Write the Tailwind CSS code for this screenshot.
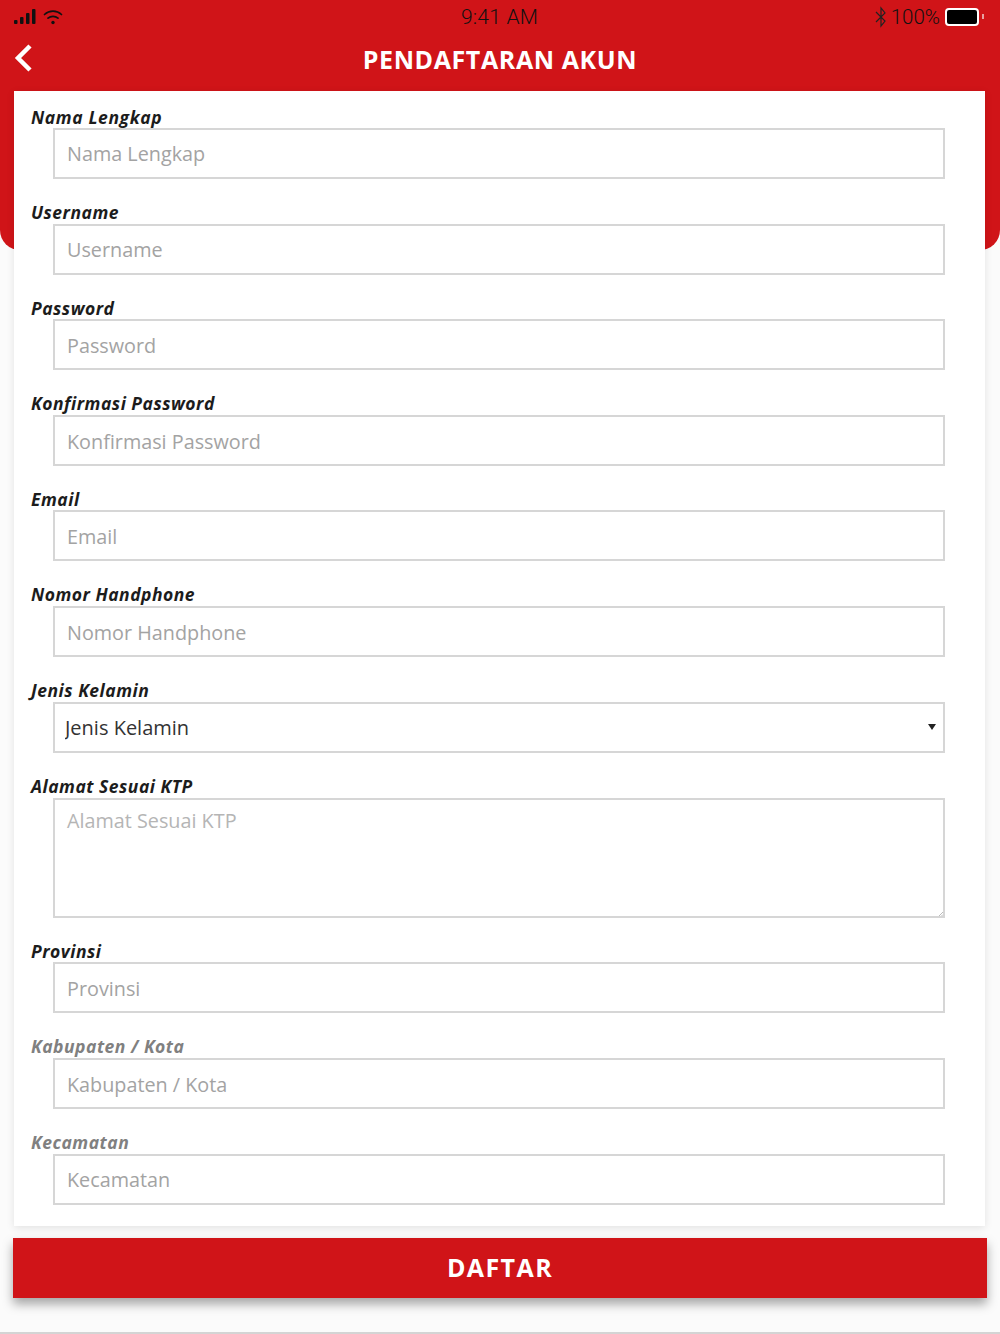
<!DOCTYPE html>
<html lang="en">
  <head>
    <script src="https://cdn.jsdelivr.net/npm/@tailwindcss/browser@4"></script>
    <meta charset="UTF-8" />
    <meta name="viewport" content="width=device-width, initial-scale=1.0" />
    <title>Pendaftaran Akun</title>
  </head>
  <body class="bg-[#fbfbfb] font-['Open_Sans',sans-serif]">
    <div class="relative h-[1334px] overflow-hidden border-b-2 border-[#d4d4d4]">
      <!-- Red backdrop behind the card -->
      <div class="absolute top-0 left-0 right-0 h-[250px] bg-[#d01418] rounded-b-[20px]"></div>

      <div class="relative">
        <!-- Status bar -->
        <div class="h-[33px] flex items-center justify-between pl-[14px] pr-[16px] text-[#111] font-['Roboto',sans-serif] font-light text-[21px]">
          <div class="w-[200px] flex items-center gap-[5px]">
            <svg width="24" height="16" viewBox="0 0 24 16" fill="#111">
              <rect x="0" y="11" width="3.5" height="4" rx="1" />
              <rect x="6" y="8" width="3.5" height="7" rx="1" />
              <rect x="12" y="4" width="3.5" height="11" rx="1" />
              <rect x="18" y="0" width="3.5" height="15" rx="1" />
            </svg>
            <svg width="20" height="16" viewBox="0 0 20 16" fill="none" stroke="#111" stroke-width="1.7" stroke-linecap="round">
              <path d="M1.5 5.5 A12.5 12.5 0 0 1 18.5 5.5" />
              <path d="M5 9.2 A7.5 7.5 0 0 1 15 9.2" />
              <circle cx="10" cy="13.5" r="1.7" fill="#111" stroke="none" />
            </svg>
          </div>
          <span class="pt-[2px] pl-[1px] tracking-[0.2px]">9:41 AM</span>
          <div class="w-[200px] flex items-center justify-end gap-[5px]">
            <svg width="12" height="22" viewBox="0 0 12 22" fill="none" stroke="#222" stroke-width="1.2">
              <path d="M1 6 L10 15 L6 20 V2 L10 7 L1 16" />
            </svg>
            <span class="pt-[2px] -ml-[1px] text-[20.5px]">100%</span>
            <div class="flex items-center gap-[3px]">
              <div class="w-[34px] h-[18px] bg-black border-2 border-white rounded-[4px]"></div>
              <div class="w-[2px] h-[5px] bg-[#e8a0a0]"></div>
            </div>
          </div>
        </div>

        <!-- Title bar -->
        <div class="relative h-[58px] flex items-center justify-center">
          <svg class="absolute left-[14px] top-[11px]" width="19" height="28" viewBox="0 0 19 28" fill="none" stroke="white" stroke-width="4.5">
            <path d="M16 2 L4 14 L16 26" />
          </svg>
          <h1 class="text-white font-bold text-[25px] pb-[5px] tracking-[0.6px]">PENDAFTARAN AKUN</h1>
        </div>

        <!-- Form card -->
        <form class="mx-[14px] w-[971px] h-[1135px] bg-white shadow-[0_2px_8px_rgba(0,0,0,0.1)] pt-[16px] pl-[17px] pr-[40px]">
          <div class="h-[20.75px] text-[17.5px] leading-[20px] tracking-[0.6px] font-bold italic text-[#1c1c1c]">Nama Lengkap</div>
          <input class="block ml-[22px] w-[892px] h-[51px] border-2 border-[#d6d6d6] px-[12px] pt-[1px] text-[19.8px] outline-none placeholder:text-[#a3a3a3]" placeholder="Nama Lengkap" />

          <div class="mt-[24px] h-[20.75px] text-[17.5px] leading-[18px] tracking-[0.5px] font-bold italic text-[#1c1c1c]">Username</div>
          <input class="block ml-[22px] w-[892px] h-[51px] border-2 border-[#d6d6d6] px-[12px] pt-[1px] text-[19.8px] outline-none placeholder:text-[#a3a3a3]" placeholder="Username" />

          <div class="mt-[24px] h-[20.75px] text-[17.5px] leading-[18px] tracking-[0.5px] font-bold italic text-[#1c1c1c]">Password</div>
          <input class="block ml-[22px] w-[892px] h-[51px] border-2 border-[#d6d6d6] px-[12px] pt-[1px] text-[19.8px] outline-none placeholder:text-[#a3a3a3]" placeholder="Password" />

          <div class="mt-[24px] h-[20.75px] text-[17.5px] leading-[18px] tracking-[0.5px] font-bold italic text-[#1c1c1c]">Konfirmasi Password</div>
          <input class="block ml-[22px] w-[892px] h-[51px] border-2 border-[#d6d6d6] px-[12px] pt-[1px] text-[19.8px] outline-none placeholder:text-[#a3a3a3]" placeholder="Konfirmasi Password" />

          <div class="mt-[23.5px] h-[20.75px] text-[17.5px] leading-[18px] tracking-[0.5px] font-bold italic text-[#1c1c1c]">Email</div>
          <input class="block ml-[22px] w-[892px] h-[51px] border-2 border-[#d6d6d6] px-[12px] pt-[1px] text-[19.8px] outline-none placeholder:text-[#a3a3a3]" placeholder="Email" />

          <div class="mt-[24px] h-[20.75px] text-[17.5px] leading-[18px] tracking-[0.5px] font-bold italic text-[#1c1c1c]">Nomor Handphone</div>
          <input class="block ml-[22px] w-[892px] h-[51px] border-2 border-[#d6d6d6] px-[12px] pt-[1px] text-[19.8px] outline-none placeholder:text-[#a3a3a3]" placeholder="Nomor Handphone" />

          <div class="mt-[24px] h-[20.75px] text-[17.5px] leading-[18px] tracking-[0.5px] font-bold italic text-[#1c1c1c]">Jenis Kelamin</div>
          <div class="relative ml-[22px] w-[892px]">
            <select class="block w-full h-[51px] appearance-none rounded-none border-2 border-[#d6d6d6] px-[10px] pt-[1px] text-[20px] text-[#333] outline-none">
              <option>Jenis Kelamin</option>
            </select>
            <svg class="absolute right-[9px] top-[21px]" width="8" height="8" viewBox="0 0 8 8" fill="#222"><path d="M0 1 H8 L4 7 Z" /></svg>
          </div>

          <div class="mt-[24px] h-[20.75px] text-[17.5px] leading-[18px] tracking-[0.5px] font-bold italic text-[#1c1c1c]">Alamat Sesuai KTP</div>
          <div class="relative ml-[22px] w-[892px]">
            <textarea class="block w-full h-[120px] resize-none border-2 border-[#d6d6d6] px-[12px] py-[6px] text-[19.8px] outline-none placeholder:text-[#b5b5b5]" placeholder="Alamat Sesuai KTP"></textarea>
            <svg class="absolute right-[2px] bottom-[2px]" width="4" height="4" viewBox="0 0 4 4" stroke="#bbb"><path d="M0 4 L4 0 M2.5 4 L4 2.5" /></svg>
          </div>

          <div class="mt-[24px] h-[20.75px] text-[17.5px] leading-[19px] tracking-[0.5px] font-bold italic text-[#1c1c1c]">Provinsi</div>
          <input class="block ml-[22px] w-[892px] h-[51px] border-2 border-[#d6d6d6] px-[12px] pt-[1px] text-[19.8px] outline-none placeholder:text-[#a3a3a3]" placeholder="Provinsi" />

          <div class="mt-[24px] h-[20.75px] text-[17.5px] leading-[18px] tracking-[0.5px] font-bold italic text-[#808080]">Kabupaten / Kota</div>
          <input class="block ml-[22px] w-[892px] h-[51px] border-2 border-[#d6d6d6] px-[12px] pt-[1px] text-[19.8px] outline-none placeholder:text-[#a3a3a3]" placeholder="Kabupaten / Kota" />

          <div class="mt-[24px] h-[20.75px] text-[17.5px] leading-[18px] tracking-[0.5px] font-bold italic text-[#808080]">Kecamatan</div>
          <input class="block ml-[22px] w-[892px] h-[51px] border-2 border-[#d6d6d6] px-[12px] pt-[1px] text-[19.8px] outline-none placeholder:text-[#a3a3a3]" placeholder="Kecamatan" />
        </form>

        <!-- Submit -->
        <button class="block mt-[12px] ml-[13px] w-[974px] h-[60px] bg-[#d01418] text-white font-bold text-[25px] tracking-[1.4px] shadow-[0_6px_10px_rgba(0,0,0,0.35)]">DAFTAR</button>
      </div>
    </div>
  </body>
</html>
